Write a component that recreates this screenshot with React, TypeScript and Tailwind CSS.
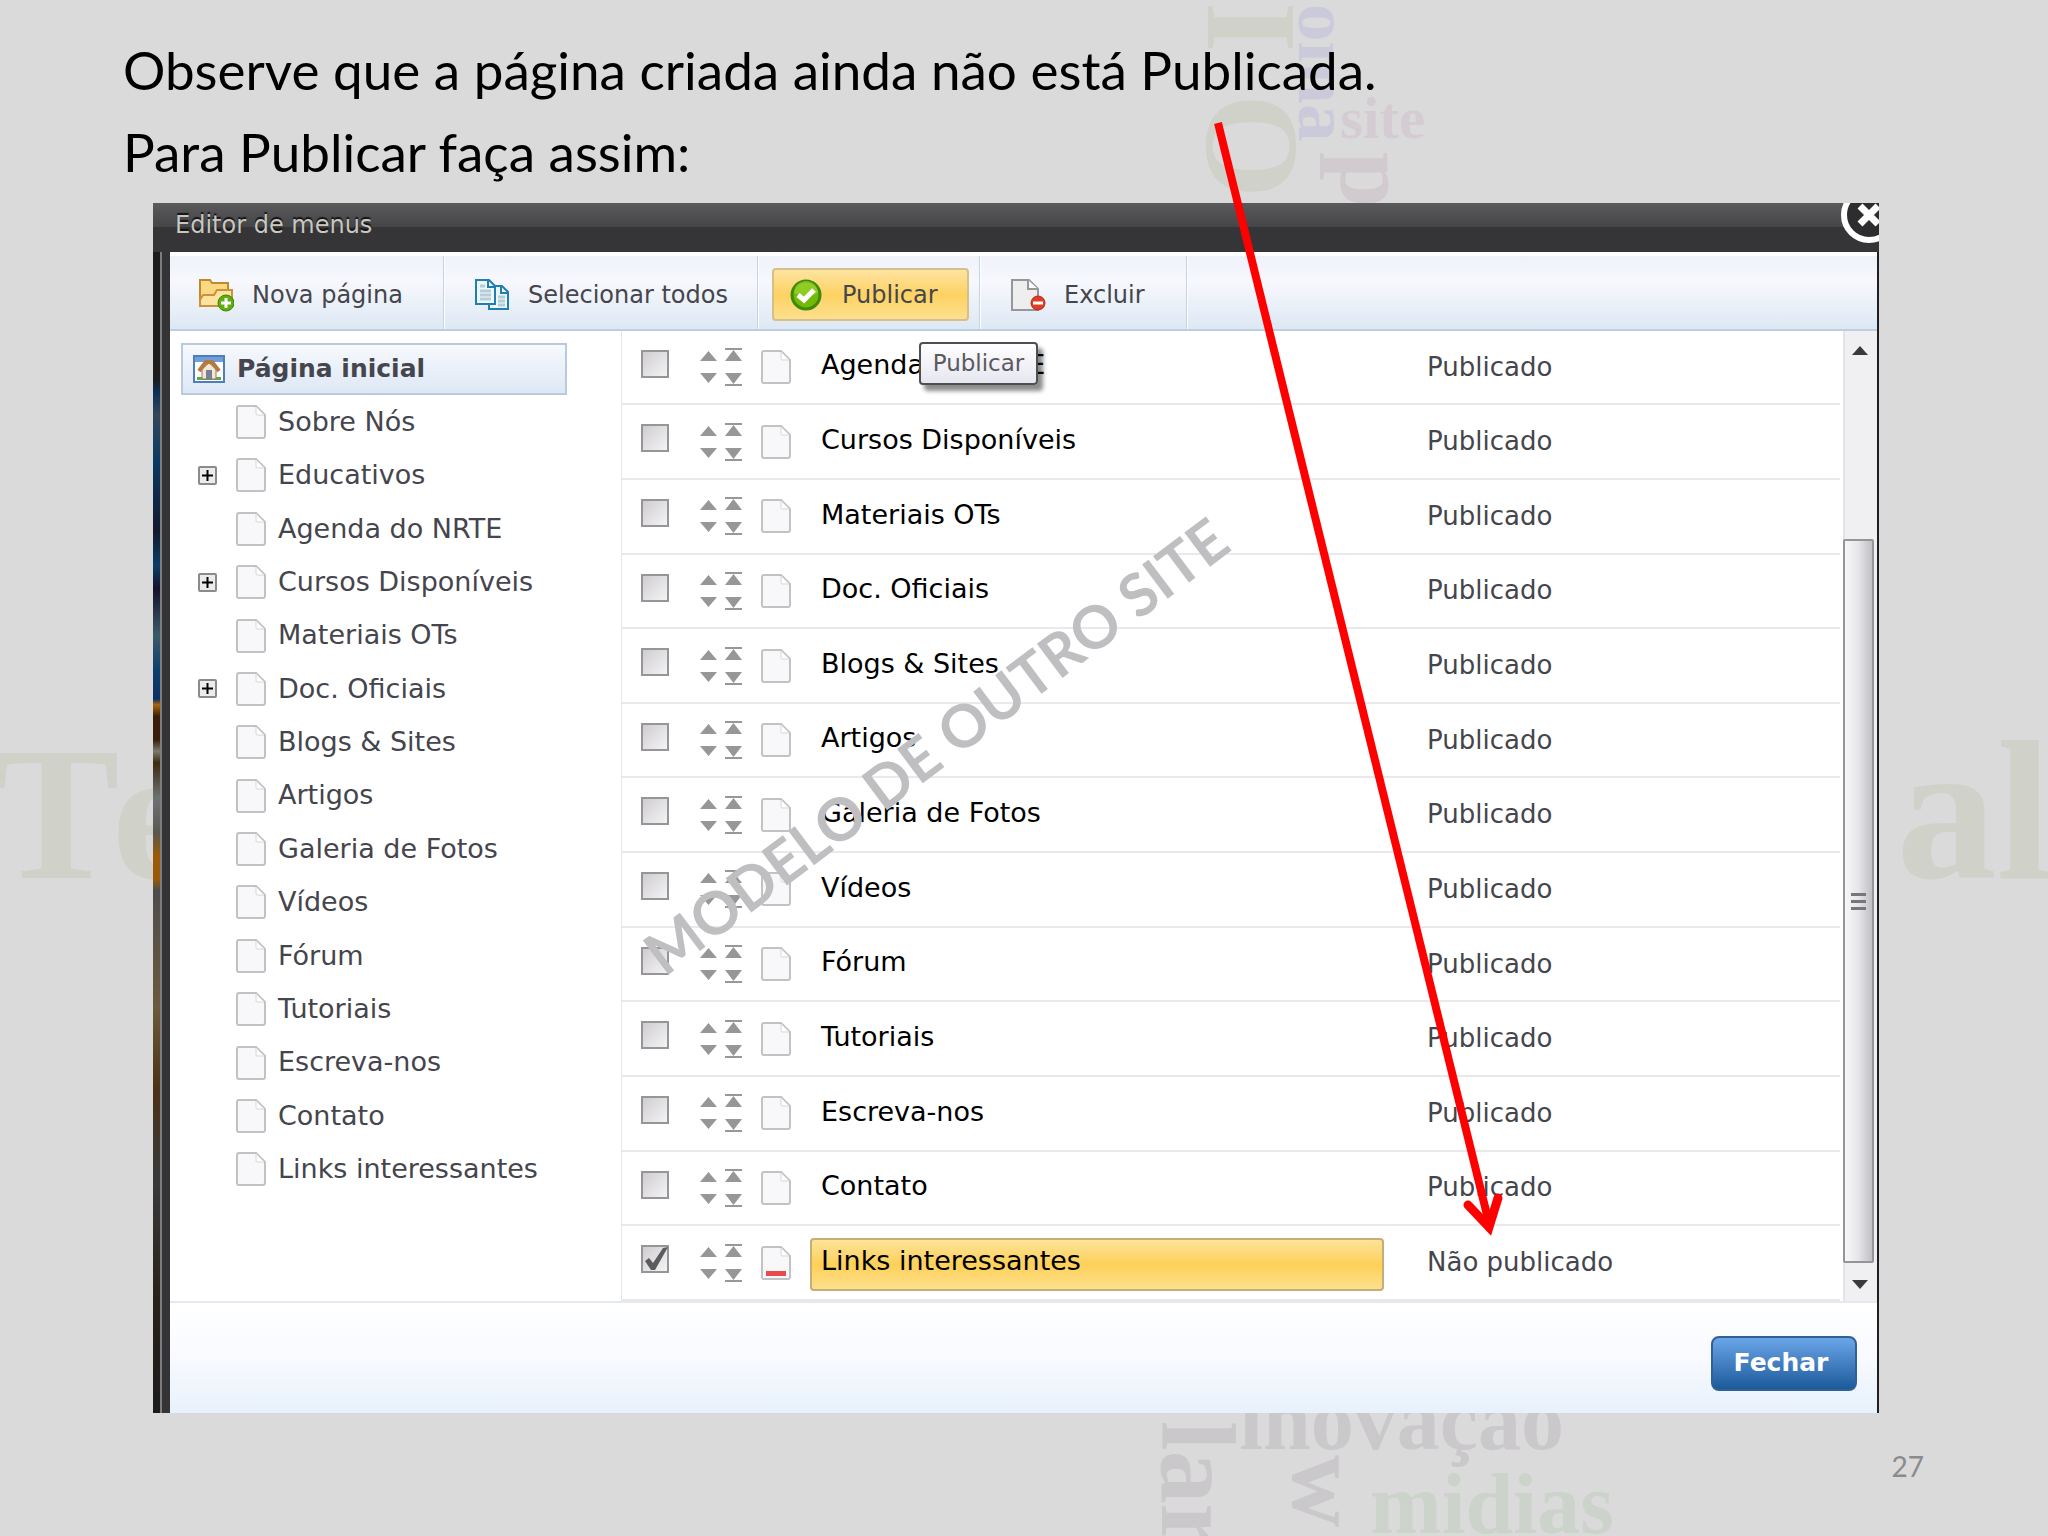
import { ReactNode } from 'react'

type TreeItem = { name: string; expandable?: boolean }
type Page = { name: string; published: boolean }

const tree: TreeItem[] = [
  { name: 'Sobre Nós' },
  { name: 'Educativos', expandable: true },
  { name: 'Agenda do NRTE' },
  { name: 'Cursos Disponíveis', expandable: true },
  { name: 'Materiais OTs' },
  { name: 'Doc. Oficiais', expandable: true },
  { name: 'Blogs & Sites' },
  { name: 'Artigos' },
  { name: 'Galeria de Fotos' },
  { name: 'Vídeos' },
  { name: 'Fórum' },
  { name: 'Tutoriais' },
  { name: 'Escreva-nos' },
  { name: 'Contato' },
  { name: 'Links interessantes' },
]

const pages: Page[] = [
  { name: 'Agenda do NRTE', published: true },
  { name: 'Cursos Disponíveis', published: true },
  { name: 'Materiais OTs', published: true },
  { name: 'Doc. Oficiais', published: true },
  { name: 'Blogs & Sites', published: true },
  { name: 'Artigos', published: true },
  { name: 'Galeria de Fotos', published: true },
  { name: 'Vídeos', published: true },
  { name: 'Fórum', published: true },
  { name: 'Tutoriais', published: true },
  { name: 'Escreva-nos', published: true },
  { name: 'Contato', published: true },
  { name: 'Links interessantes', published: false },
]

function WordCloud() {
  return (
    <svg
      aria-hidden="true"
      viewBox="0 0 2048 1536"
      className="absolute inset-0 w-full h-full font-['Liberation_Serif',serif] font-bold"
    >
      <g fill="#d0d1c9">
        <text x="-7" y="878" fontSize="190">T</text>
        <text x="112" y="878" fontSize="190">e</text>
        <text x="2052" y="878" fontSize="200" textAnchor="end">al</text>
        <text transform="translate(1208 2) rotate(90)" fontSize="130">I</text>
        <text transform="translate(1207 94) rotate(90)" fontSize="134">O</text>
      </g>
      <text transform="translate(1299 4) rotate(90)" fontSize="75" fill="#cbcada">oma</text>
      <text x="1340" y="138" fontSize="59" fill="#d5ccd3">site</text>
      <text transform="translate(1341 152) rotate(90)" fontSize="100" fill="#d1cacf">p</text>
      <g fill="#cac8cb">
        <text transform="translate(1162 1421) rotate(90)" fontSize="106">lar</text>
        <text transform="translate(1293 1455) rotate(90)" fontSize="100">w</text>
        <text x="1239" y="1449" fontSize="86">inovação</text>
      </g>
      <text x="1370" y="1533" fontSize="86" fill="#cbd3ca">midias</text>
    </svg>
  )
}

function PageIcon({ unpublished = false }: { unpublished?: boolean }) {
  return (
    <svg width="30" height="34" viewBox="0 0 30 34" aria-hidden="true" className="shrink-0">
      <path d="M3 1H20L29 10V31Q29 33 27 33H3Q1 33 1 31V3Q1 1 3 1Z" fill="#f8f7f9" stroke="#c4c1c5" strokeWidth="2" />
      <path d="M20 2V8Q20 10 22 10H28" fill="#fff" stroke="#e4e2e5" strokeWidth="1.5" />
      {unpublished && <path d="M5 25H25V30H5Z" fill="#e8494b" />}
    </svg>
  )
}

function HomeIcon() {
  return (
    <svg width="32" height="28" viewBox="0 0 32 28" aria-hidden="true">
      <rect x="1" y="1" width="30" height="26" fill="#fff" stroke="#4d7fbe" strokeWidth="2" />
      <rect x="2" y="2" width="28" height="5" fill="#6f9edb" />
      <path d="M4 22H28V25H4Z" fill="#62a844" />
      <path d="M9 14L16 8L23 14V24H9Z" fill="#f3e6d2" stroke="#8c7a68" />
      <path d="M6 16L13 7H19L26 16" fill="none" stroke="#b5783f" strokeWidth="4" />
      <rect x="13" y="15" width="6" height="9" fill="#75819a" />
    </svg>
  )
}

function FolderIcon() {
  return (
    <svg width="36" height="34" viewBox="0 0 36 34" aria-hidden="true">
      <path d="M2 27V2H12L14 5H30V27Z" fill="#fbd983" stroke="#c08a2c" strokeWidth="2" />
      <path d="M2 28V22L5 17H16L19 12H34V28Z" fill="#fde3a0" stroke="#c9933a" strokeWidth="2" />
      <circle cx="28" cy="25" r="8" fill="#5fae0e" stroke="#3f8406" />
      <path d="M28 20V30M23 25H33" stroke="#fff" strokeWidth="3" />
    </svg>
  )
}

function CopyIcon() {
  return (
    <svg width="36" height="34" viewBox="0 0 36 34" aria-hidden="true">
      <path d="M15 8H28L34 14V31H15Z" fill="#eef7fb" stroke="#1f7fae" strokeWidth="2" />
      <path d="M27 8V15H34" fill="none" stroke="#1f7fae" strokeWidth="2" />
      <path d="M2 2H15L21 8V26H2Z" fill="#eef7fb" stroke="#1f7fae" strokeWidth="2" />
      <path d="M14 2V9H21" fill="none" stroke="#1f7fae" strokeWidth="2" />
      <path d="M6 8H11M6 13H17M6 17H17M6 21H17M24 19H31M24 23H31M24 27H31" stroke="#b4cdd8" strokeWidth="3" />
    </svg>
  )
}

function CheckIcon() {
  return (
    <svg width="32" height="32" viewBox="0 0 32 32" aria-hidden="true">
      <circle cx="16" cy="16" r="14" fill="#74b905" stroke="#3d8a0c" strokeWidth="3" />
      <path d="M4 14A12 12 0 0 1 28 14Q16 20 4 14Z" fill="#a5d836" opacity="0.6" />
      <path d="M8 16L14 21L24 11" fill="none" stroke="#fff" strokeWidth="5" />
    </svg>
  )
}

function DeleteIcon() {
  return (
    <svg width="36" height="34" viewBox="0 0 36 34" aria-hidden="true">
      <path d="M2 2H19L28 11V32H2Z" fill="#eeeeef" stroke="#97979b" strokeWidth="2" />
      <path d="M18 2V11H28" fill="#fff" stroke="#97979b" strokeWidth="2" />
      <circle cx="28" cy="25" r="7" fill="#dd3f26" stroke="#b02a17" />
      <path d="M23 25H33" stroke="#fff" strokeWidth="3" />
    </svg>
  )
}

function ToolbarItem({ className, children }: { className: string; children: ReactNode }) {
  return <div className={`flex border-r border-[#c3d3e3] shadow-[1px_0_0_#ffffff] ${className}`}>{children}</div>
}

function MoveButtons() {
  return (
    <div className="grid grid-cols-2 gap-x-2 gap-y-2 w-[42px]">
      <button type="button" aria-label="Mover para cima" className="block">
        <svg width="17" height="16"><path d="M8.500 4L17 14H0Z" fill="#979698" /></svg>
      </button>
      <button type="button" aria-label="Mover para o início" className="block">
        <svg width="17" height="16"><path d="M0 1H17V3H0ZM8.500 3L17 14H0Z" fill="#979698" /></svg>
      </button>
      <button type="button" aria-label="Mover para baixo" className="block">
        <svg width="17" height="16"><path d="M0 2H17L8.500 12Z" fill="#979698" /></svg>
      </button>
      <button type="button" aria-label="Mover para o fim" className="block">
        <svg width="17" height="16"><path d="M0 2H17L8.500 13ZM0 13H17V15H0Z" fill="#979698" /></svg>
      </button>
    </div>
  )
}

function Tree() {
  return (
    <ul className="w-[452px] shrink-0 grid auto-rows-fr pt-[11px] pb-[105px] pl-[11px] border-r border-[#dfe8ee] text-[27px] text-[#45454d]">
      <li className="flex items-center">
        <a
          href="#inicio"
          className="flex items-center gap-3 w-[386px] h-[52px] pl-2.5 border-2 border-[#b9c9de] bg-linear-to-b from-[#f7f9fd] to-[#dde8f5] text-[25px] font-bold"
        >
          <HomeIcon />
          Página inicial
        </a>
      </li>
      {tree.map((item) => (
        <li key={item.name} className="flex items-center pl-[17px]">
          <span className="w-[38px] flex">
            {item.expandable && (
              <button type="button" aria-label={`Expandir ${item.name}`} className="block">
                <svg width="19" height="19" viewBox="0 0 19 19">
                  <rect x="1" y="1" width="17" height="17" rx="1" fill="#ececec" stroke="#8b8b8b" strokeWidth="2" />
                  <path d="M9.500 4V15M4 9.500H15" stroke="#000" strokeWidth="2" />
                </svg>
              </button>
            )}
          </span>
          <a href="#pagina" className="flex items-center gap-3">
            <PageIcon />
            {item.name}
          </a>
        </li>
      ))}
    </ul>
  )
}

function PageRow({ page }: { page: Page }) {
  return (
    <tr className="border-b-2 border-[#e9e8eb]">
      <td className="pl-[19px] pt-[19px] align-top">
        <span className="relative block size-7">
          <input
            type="checkbox"
            aria-label={page.name}
            defaultChecked={!page.published}
            className="block appearance-none size-7 border-2 border-[#979598] bg-linear-to-br from-[#cfcdd0] to-[#f4f3f4]"
          />
          {!page.published && (
            <svg viewBox="0 0 28 28" aria-hidden="true" className="absolute inset-0 pointer-events-none">
              <path d="M4 16L8 13L12 18L22 3L27 2L14 25H10Z" fill="#5c5b5e" />
            </svg>
          )}
        </span>
      </td>
      <td>
        <MoveButtons />
      </td>
      <td>
        <PageIcon unpublished={!page.published} />
      </td>
      <td className="pt-[3px] text-[27px] text-black">
        <div
          className={
            page.published
              ? 'h-[53px] w-[574px] pl-[11px] pb-1.5 flex items-center'
              : 'h-[53px] w-[574px] pl-[9px] pb-1.5 flex items-center rounded-sm border-2 border-[#c5ae78] bg-linear-to-b from-[#fde397] via-[#fdd057] to-[#fddf8b]'
          }
        >
          {page.name}
        </div>
      </td>
      <td className="text-[26px] text-[#45454d]">{page.published ? 'Publicado' : 'Não publicado'}</td>
    </tr>
  )
}

function Scrollbar() {
  return (
    <div className="w-[34px] shrink-0 flex flex-col bg-[#f0eff1] shadow-[inset_2px_0_0_#e4e4e8]">
      <button type="button" aria-label="Rolar para cima" className="h-[208px] pt-[15px] flex justify-center items-start">
        <svg width="16" height="9"><path d="M8 0L16 9H0Z" fill="#3a3a3c" /></svg>
      </button>
      <div className="flex-1 w-[31px] flex items-center justify-center rounded-xs border-2 border-[#959499] bg-linear-to-r from-[#f7f7f8] via-[#e6e5e8] to-[#c0bfc4]">
        <svg width="15" height="18"><path d="M0 1H15V4H0ZM0 8H15V11H0ZM0 15H15V18H0Z" fill="#77767b" /></svg>
      </div>
      <button type="button" aria-label="Rolar para baixo" className="h-[38px] pt-1 flex justify-center items-center">
        <svg width="16" height="9"><path d="M0 0H16L8 9Z" fill="#3a3a3c" /></svg>
      </button>
    </div>
  )
}

function MenuEditor() {
  return (
    <section className="relative overflow-hidden ml-[153px] mr-[169px] bg-[#343335] font-['DejaVu_Sans',sans-serif]">
      <header className="h-[49px] pl-[22px] pb-1.5 flex items-center bg-linear-to-b from-[#5a595b] from-0% via-[#464547] via-48% to-[#353436] to-50%">
        <h2 className="text-[24px] text-[#c9c7c2] text-shadow-[0_-2px_1px_#111111]">Editor de menus</h2>
        <button type="button" aria-label="Fechar janela" className="absolute -top-4 -right-[18px]">
          <svg width="56" height="56" viewBox="0 0 56 56">
            <circle cx="28" cy="28" r="25" fill="#2d2c2e" stroke="#fff" strokeWidth="6" />
            <path d="M19 19L37 37M37 19L19 37" stroke="#fff" strokeWidth="7" />
          </svg>
        </button>
      </header>
      <div className="flex">
        {/* sliver of the site behind the dialog */}
        <div className="w-[7px] bg-[linear-gradient(to_bottom,#1c1c1e_0%,#1c1c1e_11%,#0d2f52_12%,#33475a_14%,#0b3a63_18%,#111a2c_24%,#0c3d66_27%,#14122a_29%,#3c5a68_33%,#0d3f6e_36%,#0c2f63_38.500%,#a8660c_39%,#3a1d0a_40%,#3a1d0a_42%,#7b7b6e_43%,#3c2c10_44%,#6f7172_47%,#59584f_50%,#9a5a08_52%,#9a5a08_54%,#4d4c4d_55%,#6b5a3c_65%,#4a3216_72%,#39393b_80%,#2a2118_90%,#1b1b1d_100%)]" />
        <div className="w-2.5 border-l-2 border-[#7d7c7e]" />
        <div className="flex-1 bg-white">
          <nav className="flex h-[79px] border-t-4 border-t-white border-b-2 border-b-[#bccfe0] bg-linear-to-b from-[#f0f2fa] via-[#f7f8fd] via-35% to-[#dde8f4] text-[24px] text-[#45454d]">
            <ToolbarItem className="w-[274px] pt-1">
              <button type="button" className="flex items-center gap-[18px] pl-7">
                <FolderIcon />
                Nova página
              </button>
            </ToolbarItem>
            <ToolbarItem className="w-[314px] pt-1">
              <button type="button" className="flex items-center gap-[18px] pl-[30px]">
                <CopyIcon />
                Selecionar todos
              </button>
            </ToolbarItem>
            <ToolbarItem className="w-[222px] relative items-center pl-3.5 pt-1">
              <button
                type="button"
                aria-describedby="publicar-dica"
                className="flex items-center gap-5 h-[53px] w-[197px] pl-4 rounded-sm border-2 border-[#d5bf8a] bg-linear-to-b from-[#fde4a0] via-[#fdd261] to-[#fddf8d]"
              >
                <CheckIcon />
                Publicar
              </button>
              <span
                id="publicar-dica"
                role="tooltip"
                className="absolute z-10 top-[86px] left-[161px] w-[119px] h-[43px] flex items-center justify-center rounded-sm border-2 border-[#4f4e52] bg-linear-to-b from-white to-[#e6e6f0] text-[23px] text-[#5a5a60] shadow-[5px_6px_4px_rgba(0,0,0,0.45)]"
              >
                Publicar
              </span>
            </ToolbarItem>
            <ToolbarItem className="w-[207px] pt-1">
              <button type="button" className="flex items-center gap-[18px] pl-[30px]">
                <DeleteIcon />
                Excluir
              </button>
            </ToolbarItem>
          </nav>
          <div className="flex border-b-2 border-[#e3e9ee]">
            <Tree />
            <div className="flex-1 pr-[3px]">
              <table className="w-full h-[970px] table-fixed border-collapse">
                <colgroup>
                  <col className="w-[78px]" />
                  <col className="w-[61px]" />
                  <col className="w-[49px]" />
                  <col />
                  <col className="w-[413px]" />
                </colgroup>
                <tbody>
                  {pages.map((page) => (
                    <PageRow key={page.name} page={page} />
                  ))}
                </tbody>
              </table>
            </div>
            <Scrollbar />
          </div>
          <footer className="h-[110px] pr-5 pt-[33px] flex justify-end items-start bg-linear-to-b from-white via-[#f8fafe] to-[#e7f1fc]">
            <button
              type="button"
              className="w-[146px] h-[55px] pb-0.5 pr-1.5 rounded-lg border-2 border-[#2f6096] bg-linear-to-b from-[#6aa5e8] to-[#1a5b9b] text-[25px] font-bold text-white"
            >
              Fechar
            </button>
          </footer>
        </div>
        <div className="w-0.5 bg-[#1f1e20]" />
      </div>
      <p className="absolute top-[543px] left-[783px] -translate-x-1/2 -translate-y-1/2 -rotate-37 whitespace-nowrap font-['Lato',sans-serif] text-[59px] font-bold text-[#bfbec0]">
        MODELO DE OUTRO SITE
      </p>
    </section>
  )
}

export default function App() {
  return (
    <main className="relative min-h-screen overflow-hidden bg-[#dadadb] font-['Lato',sans-serif]">
      <WordCloud />
      <div className="relative pt-[29px] pb-[10px] pl-[123px] text-[53px] leading-[82px] text-black">
        <p>Observe que a página criada ainda não está Publicada.</p>
        <p>Para Publicar faça assim:</p>
      </div>
      <MenuEditor />
      <p className="relative mt-[33px] pr-[124px] text-right text-[28px] leading-10 text-[#8b8b8b]">27</p>
      <svg
        aria-hidden="true"
        width="310"
        height="1130"
        className="absolute left-[1200px] top-[115px] pointer-events-none"
        fill="none"
        stroke="#ff0000"
      >
        <path d="M18 8L289 1108" strokeWidth="8" />
        <path d="M268 1090L289 1112L298 1083" strokeWidth="9" strokeLinecap="round" />
      </svg>
    </main>
  )
}
